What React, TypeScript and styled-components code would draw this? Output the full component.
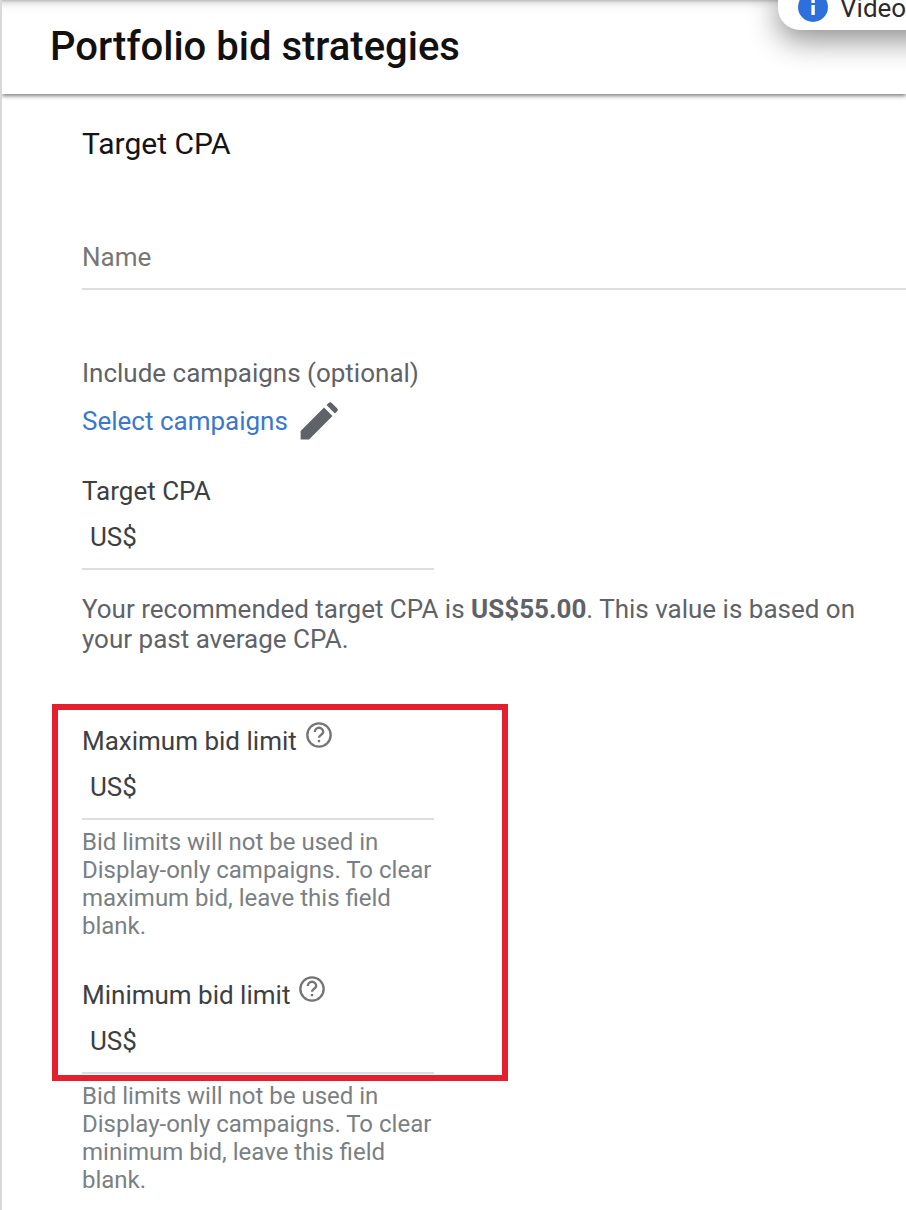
import React from 'react'
import styled, { createGlobalStyle } from 'styled-components'

const GlobalStyle = createGlobalStyle`
  html, body {
    margin: 0;
    padding: 0;
    background: #fff;
  }
  body {
    font-family: Roboto, "Liberation Sans", sans-serif;
    overflow: hidden;
  }
`

const Page = styled.div`
  position: relative;
  width: 906px;
  height: 1210px;
  overflow: hidden;
  background: #fff;
  border-left: 2px solid #d9d9d9;
  box-sizing: border-box;
`

const Header = styled.header`
  position: relative;
  height: 94px;
  box-sizing: border-box;
  padding: 25px 0 0 48px;
  background: linear-gradient(#bdbdbd 0, #e8e8e8 3px, #fbfbfb 8px, #fff 14px);
  box-shadow: 0 2px 4px rgba(0, 0, 0, 0.5);
`

const Title = styled.h1`
  margin: 0;
  font-size: 40px;
  line-height: 44px;
  font-weight: 500;
  color: #111;
`

const Toast = styled.div`
  position: absolute;
  top: -20px;
  right: -60px;
  width: 188px;
  height: 50px;
  display: flex;
  align-items: flex-end;
  gap: 12px;
  padding: 0 0 8px 20px;
  box-sizing: border-box;
  background: #fff;
  border-radius: 22px;
  box-shadow: 0 10px 30px rgba(0, 0, 0, 0.45);
  font-size: 26px;
  line-height: 28px;
  color: #2b2b2b;
`

const InfoDot = styled.svg`
  width: 30px;
  height: 30px;
  flex: none;
`

const Content = styled.main`
  padding: 33px 0 0 80px;
`

const CardTitle = styled.h2`
  margin: 0;
  font-size: 30px;
  line-height: 34px;
  font-weight: 400;
  color: #141414;
`

const NameField = styled.div`
  margin-top: 81px;
  height: 46px;
  border-bottom: 2px solid #dedede;
  font-size: 26px;
  line-height: 30px;
  color: #777;
`

const Label = styled.div`
  display: flex;
  align-items: flex-start;
  gap: 8px;
  font-size: 26px;
  line-height: 30px;
  color: #5f6368;

  svg {
    margin-top: -5px;
    flex: none;
  }
`

const IncludeLabel = styled(Label)`
  margin-top: 68px;
`

const SelectRow = styled.div`
  display: flex;
  align-items: center;
  gap: 11px;
  margin-top: 14px;
  height: 38px;
`

const Link = styled.a`
  font-size: 26px;
  line-height: 30px;
  color: #3b78c9;
`

const FieldLabel = styled(Label)<{ $gapTop: number }>`
  margin-top: ${(p) => p.$gapTop}px;
  color: #3c4043;
`

const MoneyField = styled.div`
  width: 352px;
  height: 64px;
  padding: 16px 0 0 8px;
  box-sizing: border-box;
  border-bottom: 2px solid #dedede;
  font-size: 26px;
  line-height: 30px;
  color: #3c4043;
`

const Recommendation = styled.p`
  margin: 24px 0 0;
  width: 790px;
  font-size: 26px;
  line-height: 30px;
  color: #5f6368;

  b {
    font-weight: 700;
  }
`

const Hint = styled.p`
  margin: 8px 0 0;
  width: 352px;
  font-size: 24px;
  line-height: 28px;
  color: #7a7f84;
`

const Highlight = styled.div`
  position: absolute;
  left: 50px;
  top: 704px;
  width: 456px;
  height: 377px;
  box-sizing: border-box;
  border: 6px solid #e5202e;
  pointer-events: none;
`

const HelpIcon: React.FC = () => (
  <svg width="28" height="28" viewBox="0 0 24 24" fill="none" stroke="#757575" strokeWidth="2">
    <circle cx="12" cy="12" r="10" />
    <path d="M8.4 9.4a3.6 3.6 0 0 1 7.2 0c0 2.4-3.6 2.4-3.6 5" strokeLinecap="butt" />
    <rect x="11" y="16.2" width="2" height="2" fill="#757575" stroke="none" />
  </svg>
)

const PencilIcon: React.FC = () => (
  <svg width="39" height="39" viewBox="0 0 24 24" fill="#5f6368">
    <path d="M1 23v-5.2L15.4 3.4l5.2 5.2L6.2 23H1zM16.9 1.9l1.3-1.3 a1.4 1.4 0 0 1 2 0l3.2 3.2a1.4 1.4 0 0 1 0 2l-1.3 1.3-5.2-5.2z" />
  </svg>
)

export default function App() {
  return (
    <>
      <GlobalStyle />
      <Page>
        <Header>
          <Title>Portfolio bid strategies</Title>
          <Toast>
            <InfoDot viewBox="0 0 30 30">
              <circle cx="15" cy="15" r="15" fill="#2f6fdc" />
              <rect x="13.4" y="13" width="3.4" height="10" fill="#fff" />
              <rect x="13.4" y="7.6" width="3.4" height="3.4" fill="#fff" />
            </InfoDot>
            Video
          </Toast>
        </Header>
        <Content>
          <CardTitle>Target CPA</CardTitle>
          <NameField>Name</NameField>
          <IncludeLabel>Include campaigns (optional)</IncludeLabel>
          <SelectRow>
            <Link>Select campaigns</Link>
            <PencilIcon />
          </SelectRow>
          <FieldLabel $gapTop={36}>Target CPA</FieldLabel>
          <MoneyField>US$</MoneyField>
          <Recommendation>
            Your recommended target CPA is <b>US$55.00</b>. This value is based on your past average CPA.
          </Recommendation>
          <FieldLabel $gapTop={72}>
            Maximum bid limit <HelpIcon />
          </FieldLabel>
          <MoneyField>US$</MoneyField>
          <Hint>Bid limits will not be used in Display-only campaigns. To clear maximum bid, leave this field blank.</Hint>
          <FieldLabel $gapTop={40}>
            Minimum bid limit <HelpIcon />
          </FieldLabel>
          <MoneyField>US$</MoneyField>
          <Hint>Bid limits will not be used in Display-only campaigns. To clear minimum bid, leave this field blank.</Hint>
        </Content>
        <Highlight />
      </Page>
    </>
  )
}
